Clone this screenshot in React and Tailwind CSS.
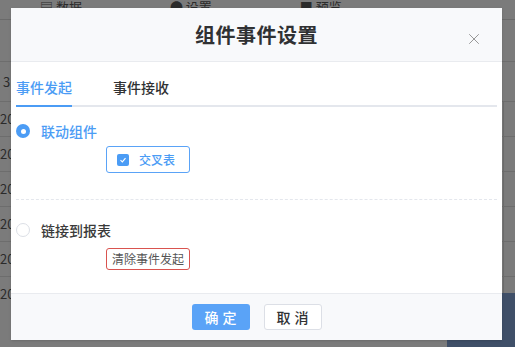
import { X } from 'lucide-react'

const font = { fontFamily: '"Noto Sans CJK SC", "Noto Sans", sans-serif' }

export default function App() {
  const rows = [0, 1, 2, 3, 4, 5]
  return (
    <div className="relative w-[515px] h-[347px] overflow-hidden bg-[#7b7b7b]" style={font}>
      {/* page behind the mask */}
      <div className="h-[8px] flex items-end text-[13px] leading-[14px] text-[#2b2b2b]">
        <div className="ml-[40px] -mb-[6px] flex gap-[88px]">
          <span>▤ 数据</span>
          <span>● 设置</span>
          <span>■ 预览</span>
        </div>
      </div>
      <div className="mt-[11px] border-t border-[#6a6a6a] h-[42px]" />
      <div className="border-t border-[#6d6d6d] h-[40px] pl-[3px] text-[13px] text-[#2a2a2a] flex items-center">3</div>
      {rows.map((r) => (
        <div key={r} className="border-t border-[#6d6d6d] h-[35px] flex items-center justify-between text-[13px] text-[#2a2a2a]">
          <span>20</span>
          <span className="w-[12px] h-full border-l border-[#6d6d6d]" />
        </div>
      ))}
      <div className="absolute right-0 top-[293px] w-[68px] h-[54px] bg-[#3f4f68]" />

      <Dialog />
    </div>
  )
}

function Dialog() {
  return (
    <div className="absolute left-[11px] top-[8px] w-[491px] h-[332px] bg-white flex flex-col shadow-sm">
      <div className="h-[54px] bg-[#f8f9fb] border-b border-[#e9ebef] relative flex items-center justify-center">
        <h1 className="text-[20px] font-bold text-[#303133] tracking-[0.5px]">组件事件设置</h1>
        <X className="absolute right-[19px] top-[22px] w-[18px] h-[18px] text-[#8c8c8c]" strokeWidth={1.2} />
      </div>

      <div className="flex-1 px-[5px]">
        <div className="flex gap-[41px] border-b-2 border-[#e4e7ed] pt-[15px] text-[14px] font-medium leading-[20px]">
          <div className="pb-[8px] -mb-[2px] border-b-2 border-[#4b9cf5] text-[#4b9cf5] w-[56px] text-center">事件发起</div>
          <div className="pb-[8px] text-[#303133]">事件接收</div>
        </div>

        <div className="mt-[14px] flex items-center h-[20px]">
          <span className="w-[14px] h-[14px] rounded-full bg-[#4b9cf5] flex items-center justify-center">
            <span className="w-[5px] h-[5px] rounded-full bg-white" />
          </span>
          <span className="ml-[11px] text-[14px] font-medium text-[#4b9cf5]">联动组件</span>
        </div>
        <div className="mt-[5px] ml-[90px] w-[84px] h-[27px] border border-[#5aa3f7] rounded-[3px] flex items-center pl-[10px]">
          <span className="w-[12px] h-[12px] rounded-[2px] bg-[#4b9cf5] flex items-center justify-center">
            <svg viewBox="0 0 12 12" className="w-[10px] h-[10px]">
              <path d="M3 6.2 L5.2 8.2 L9 3.8" stroke="white" strokeWidth="1.4" fill="none" />
            </svg>
          </span>
          <span className="ml-[10px] text-[12px] font-medium text-[#4b9cf5]">交叉表</span>
        </div>

        <div className="mt-[26px] border-t border-dashed border-[#e4e7ed]" />

        <div className="mt-[20px] flex items-center h-[20px]">
          <span className="w-[14px] h-[14px] rounded-full border border-[#dcdfe6] bg-white" />
          <span className="ml-[11px] text-[14px] font-medium text-[#3a3a3a]">链接到报表</span>
        </div>
        <div className="mt-[8px] ml-[90px] w-[84px] h-[22px] border border-[#d9534f] rounded-[3px] flex items-center justify-center text-[12px] text-[#555]">
          清除事件发起
        </div>
      </div>

      <div className="h-[47px] bg-[#f8f9fb] border-t border-[#e9ebef] flex items-center justify-center gap-[14px]">
        <button className="w-[58px] h-[26px] rounded-[3px] bg-[#5aa3f7] text-white text-[14px] font-medium tracking-[4px] pl-[4px]">确定</button>
        <button className="w-[58px] h-[26px] rounded-[3px] border border-[#dcdfe6] bg-white text-[#303133] text-[14px] font-medium tracking-[4px] pl-[4px]">取消</button>
      </div>
    </div>
  )
}
